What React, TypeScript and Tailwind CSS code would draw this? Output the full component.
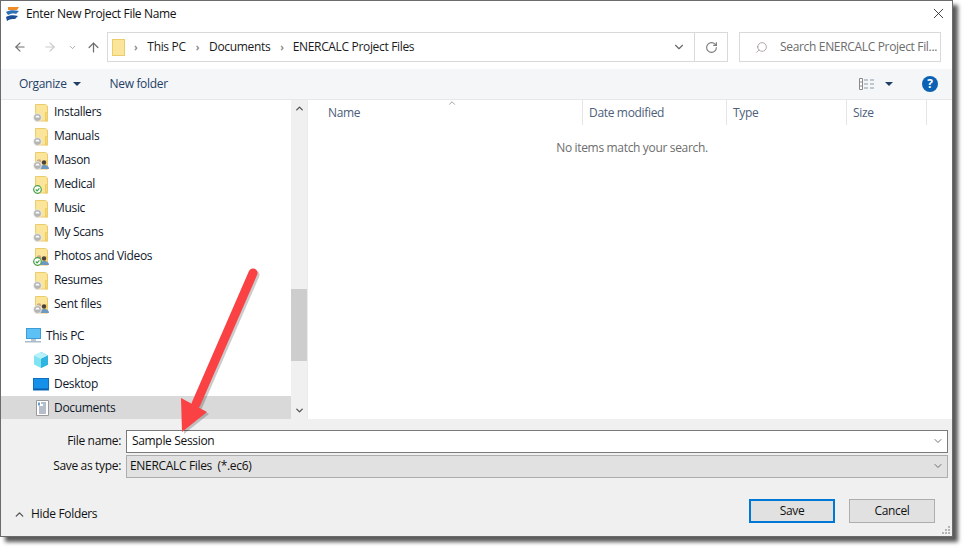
import React from 'react';
import { ArrowLeft, ArrowRight, ArrowUp, ChevronDown, ChevronUp, RotateCw, Search, X } from 'lucide-react';

type Badge = 'share' | 'people' | 'check' | 'peopleCheck' | 'none';

const FolderIcon = ({ badge = 'none' }: { badge?: Badge }) => {
  const people = badge === 'people' || badge === 'peopleCheck';
  return (
    <svg width="16" height="20" viewBox="0 0 16 20" className="shrink-0">
      <path d="M2.500 2.500h10l2 1.500v15h-12z" fill="#fbe59b" stroke="#eccb6a" />
      <path d="M12.500 10.500h2v8.500h-2z" fill="#f8d775" stroke="#eccb6a" />
      {people && (
        <>
          <circle cx="11" cy="12.500" r="2.200" fill="#4a4238" />
          <path d="M7 19c0-3 1.500-4 4-4s5 1 5 4z" fill="#6f97c4" />
          <circle cx="6" cy="11.500" r="2.300" fill="#c9a98a" />
        </>
      )}
      {(badge === 'share' || badge === 'people') && (
        <>
          <circle cx="4.500" cy="15.500" r="4" fill="#b5b5b5" stroke="#fff" strokeWidth="0.6" />
          <path d="M2.500 15.500a2 2 0 0 1 4 0z" fill="#fff" />
        </>
      )}
      {(badge === 'check' || badge === 'peopleCheck') && (
        <>
          <circle cx="4.500" cy="15.500" r="3.800" fill="#fff" stroke="#43a047" strokeWidth="1.200" />
          <path d="M2.800 15.500l1.300 1.400 2.300-2.600" fill="none" stroke="#43a047" strokeWidth="1.200" />
        </>
      )}
    </svg>
  );
};

const PcIcon = () => (
  <svg width="17" height="16" viewBox="0 0 17 16" className="shrink-0">
    <rect x="1.500" y="0.500" width="14" height="10" fill="#5cc1f5" stroke="#3e9bd8" />
    <rect x="6" y="11" width="5" height="2" fill="#b9c6d0" />
    <rect x="0" y="13" width="16" height="1.500" fill="#a9bcc9" />
  </svg>
);

const CubeIcon = () => (
  <svg width="16" height="16" viewBox="0 0 16 16" className="shrink-0">
    <path d="M8 0l7 3.500v9L8 16z" fill="#1aa6d8" />
    <path d="M8 0L1 3.500v9L8 16z" fill="#7fe3f2" />
    <path d="M1 3.500L8 7l7-3.500L8 0z" fill="#b8f1f7" />
    <path d="M8 7v9l7-3.500v-9z" fill="#2fb5e0" />
  </svg>
);

const DesktopIcon = () => (
  <svg width="16" height="13" viewBox="0 0 16 13" className="shrink-0">
    <rect x="0.500" y="0.500" width="15" height="11.500" fill="#1591ea" stroke="#0f6fc0" />
    <rect x="1" y="10.500" width="14" height="1.500" fill="#0b5fa8" />
  </svg>
);

const DocIcon = () => (
  <svg width="13" height="16" viewBox="0 0 13 16" className="shrink-0 ml-[3px]">
    <path d="M.5.500h12v15H.500z" fill="#fff" stroke="#9a9a9a" />
    <path d="M5 3h5M7 5h3M3 7h7M3 9h7M3 11h7M3 13h7" stroke="#6d7f92" strokeWidth="1" />
    <path d="M3 2.500v3" stroke="#2f7fc4" strokeWidth="1.500" />
  </svg>
);

const LogoIcon = () => (
  <svg width="15" height="16" viewBox="0 0 15 16">
    <path d="M3 1h11L12 4H3z" fill="#f08a24" />
    <path d="M1 6c3-2 8-2 13-1l-3 3c-3-1-6 0-8 1z" fill="#2c6fb5" />
    <path d="M1 11c3-2 8-2 12-1l-3 3c-3 0-5 0-8 2z" fill="#1d4f96" />
  </svg>
);

const ViewsIcon = () => (
  <svg width="16" height="12" viewBox="0 0 16 12">
    <path d="M.5.500h3v11h-3z" fill="#fff" stroke="#8a8a8a" />
    <path d="M.5 4h3M.5 8h3" stroke="#8a8a8a" />
    <path d="M5 2h4M11 2h4M5 6h4M11 6h4M5 10h4M11 10h4" stroke="#8a97a8" />
  </svg>
);

const GripIcon = () => (
  <svg className="absolute right-[1px] bottom-[1px]" width="10" height="10" viewBox="0 0 10 10" fill="#b5b5b5">
    <rect x="7" y="1" width="2" height="2" />
    <rect x="4" y="4" width="2" height="2" />
    <rect x="7" y="4" width="2" height="2" />
    <rect x="1" y="7" width="2" height="2" />
    <rect x="4" y="7" width="2" height="2" />
    <rect x="7" y="7" width="2" height="2" />
  </svg>
);

const Caret = () => <span className="block w-0 h-0 border-l-[4px] border-r-[4px] border-t-[4px] border-l-transparent border-r-transparent border-t-[#1f3f68]" />;

const Crumb = () => <span className="text-[#8a8a8a] text-[10px] font-bold">›</span>;

const folders: { name: string; badge: Badge }[] = [
  { name: 'Installers', badge: 'share' },
  { name: 'Manuals', badge: 'share' },
  { name: 'Mason', badge: 'people' },
  { name: 'Medical', badge: 'check' },
  { name: 'Music', badge: 'share' },
  { name: 'My Scans', badge: 'share' },
  { name: 'Photos and Videos', badge: 'peopleCheck' },
  { name: 'Resumes', badge: 'share' },
  { name: 'Sent files', badge: 'people' },
];

const Row = ({ icon, label, selected, indent = true }: { icon: React.ReactNode; label: string; selected?: boolean; indent?: boolean }) => (
  <div className={`h-6 shrink-0 flex items-center ${indent ? 'pl-[32px]' : 'pl-[24px]'} ${selected ? 'bg-[#d9d9d9]' : ''}`}>
    <div className="w-[21px] flex items-center">{icon}</div>
    <span className="text-[#10182a]">{label}</span>
  </div>
);

const Arrow = () => (
  <svg className="absolute left-[170px] top-[260px] pointer-events-none" width="100" height="180" viewBox="170 260 100 180">
    <g transform="translate(2 2)" opacity="0.2" fill="#000" stroke="#000">
      <path d="M253 273L196 404" strokeWidth="9" strokeLinecap="round" />
      <path d="M182 432L181 398L207 412z" strokeWidth="0" />
    </g>
    <path d="M253 273L196 404" stroke="#fa4244" strokeWidth="9" strokeLinecap="round" />
    <path d="M182 432L181 398L207 412z" fill="#fa4244" />
  </svg>
);

export default function App() {
  return (
    <div className="relative w-[969px] h-[552px] bg-white overflow-hidden text-[12px] font-['Open_Sans','Noto_Sans',sans-serif] tracking-[-0.33px]">
      <div className="relative w-[953px] h-[537px] flex flex-col bg-white border border-[#6b6b6b] shadow-[5px_5px_4px_rgba(0,0,0,0.65)]">
        {/* title bar */}
        <div className="h-[26px] flex items-center pl-[4px] pr-[5px] shrink-0">
          <LogoIcon />
          <span className="ml-[6px] text-[#111]">Enter New Project File Name</span>
          <X className="ml-auto mb-[2px]" size={17} strokeWidth={1.2} color="#222" />
        </div>

        {/* nav bar */}
        <div className="h-[42px] flex items-start pt-[5px] shrink-0 pl-[12px]">
          <div className="w-[94px] h-[30px] flex items-center">
            <ArrowLeft size={14} strokeWidth={2} color="#6f6f6f" />
            <ArrowRight size={14} strokeWidth={2} color="#c9c9c9" className="ml-[16px]" />
            <ChevronDown size={9} strokeWidth={2.5} color="#a8a8a8" className="ml-[11px]" />
            <ArrowUp size={15} strokeWidth={2} color="#6f6f6f" className="ml-[9px]" />
          </div>
          <div className="w-[621px] h-[30px] flex items-center border border-[#d9d9d9] text-[#1b1b1b]">
            <div className="ml-[4px] w-[13px] h-[17px] bg-[#fbe59b] border border-[#eccb6a]" />
            <span className="ml-[9px]"><Crumb /></span>
            <span className="ml-[10px]">This PC</span>
            <span className="ml-[10px]"><Crumb /></span>
            <span className="ml-[10px]">Documents</span>
            <span className="ml-[10px]"><Crumb /></span>
            <span className="ml-[9px]">ENERCALC Project Files</span>
            <ChevronDown size={14} strokeWidth={2} color="#6a6a6a" className="ml-auto mr-[8px]" />
            <div className="w-[33px] h-full border-l border-[#d9d9d9] flex items-center justify-center">
              <RotateCw size={13} strokeWidth={2} color="#7a7a7a" />
            </div>
          </div>
          <div className="ml-[11px] w-[202px] h-[30px] flex items-center border border-[#d9d9d9] pl-[15px] text-[#6d6d6d] overflow-hidden">
            <Search size={13} strokeWidth={1.2} color="#8a7d7d" className="-scale-x-100 shrink-0" />
            <span className="ml-[12px] whitespace-nowrap">Search ENERCALC Project Fil...</span>
          </div>
        </div>

        {/* toolbar */}
        <div className="h-[31px] flex items-center bg-[#f5f6f7] border-b border-[#e8e8e8] shrink-0 pl-[18px] pr-[14px] text-[#1f3f68]">
          <span>Organize</span>
          <span className="ml-[6px]"><Caret /></span>
          <span className="ml-[29px]">New folder</span>
          <div className="ml-auto flex items-center">
            <ViewsIcon />
            <span className="ml-[10px]"><Caret /></span>
            <div className="ml-[29px] w-4 h-4 rounded-full bg-[#0b62b5] text-white flex items-center justify-center text-[12px] font-bold">?</div>
          </div>
        </div>

        {/* content */}
        <div className="flex-1 flex min-h-0">
          <div className="w-[290px] h-full overflow-hidden flex flex-col shrink-0">
            {folders.map(f => <Row key={f.name} icon={<FolderIcon badge={f.badge} />} label={f.name} />)}
            <div className="h-2 shrink-0" />
            <Row indent={false} icon={<PcIcon />} label="This PC" />
            <Row icon={<CubeIcon />} label="3D Objects" />
            <Row icon={<DesktopIcon />} label="Desktop" />
            <Row icon={<DocIcon />} label="Documents" selected />
          </div>
          <div className="relative w-[16px] h-full bg-[#f0f0f0] flex flex-col items-center justify-between shrink-0">
            <ChevronUp size={11} strokeWidth={3} color="#555" className="mt-[3px]" />
            <div className="absolute left-0 top-[189px] w-full h-[72px] bg-[#cdcdcd]" />
            <ChevronDown size={11} strokeWidth={3} color="#555" className="mb-[3px]" />
          </div>
          <div className="flex-1 border-l border-[#ececec] relative">
            <div className="h-[25px] flex items-center text-[#4c607a] relative">
              <ChevronUp size={10} strokeWidth={1.5} color="#666" className="absolute left-[139px] -top-[2px]" />
              <div className="w-[275px] h-full pl-[20px] flex items-center border-r border-[#e5e5e5]">Name</div>
              <div className="w-[144px] h-full pl-[6px] flex items-center border-r border-[#e5e5e5]">Date modified</div>
              <div className="w-[120px] h-full pl-[6px] flex items-center border-r border-[#e5e5e5]">Type</div>
              <div className="w-[80px] h-full pl-[6px] flex items-center border-r border-[#e5e5e5]">Size</div>
            </div>
            <div className="mt-[14px] pl-[4px] text-center text-[#6d6d6d]">No items match your search.</div>
          </div>
        </div>

        {/* footer */}
        <div className="h-[117px] bg-[#f0f0f0] shrink-0 relative text-[#111]">
          <div className="flex items-center mt-[11px] h-[22px]">
            <span className="w-[120px] text-right">File name:</span>
            <div className="ml-[5px] w-[822px] h-[23px] bg-white border border-[#7a7a7a] flex items-center pl-[5px]">
              <span>Sample Session</span>
              <ChevronDown size={12} strokeWidth={1.5} color="#444" className="ml-auto mr-[3px]" />
            </div>
          </div>
          <div className="flex items-center mt-[3px] h-[22px]">
            <span className="w-[120px] text-right">Save as type:</span>
            <div className="ml-[5px] w-[822px] h-[23px] bg-[#e1e1e1] border border-[#adadad] flex items-center pl-[3px]">
              <span className="whitespace-pre">ENERCALC Files  (*.ec6)</span>
              <ChevronDown size={12} strokeWidth={1.5} color="#444" className="ml-auto mr-[3px]" />
            </div>
          </div>
          <div className="flex items-center mt-[22px] pl-[12px] pr-[17px]">
            <ChevronUp size={13} strokeWidth={2.5} color="#555" className="relative top-[3px]" />
            <span className="ml-[5px] relative top-[3px]">Hide Folders</span>
            <div className="ml-auto w-[86px] h-[24px] bg-[#e1e1e1] border-2 border-[#0078d7] flex items-center justify-center">Save</div>
            <div className="ml-[14px] w-[86px] h-[24px] bg-[#e1e1e1] border border-[#adadad] flex items-center justify-center">Cancel</div>
          </div>
          <GripIcon />
        </div>
      </div>
      <Arrow />
    </div>
  );
}
